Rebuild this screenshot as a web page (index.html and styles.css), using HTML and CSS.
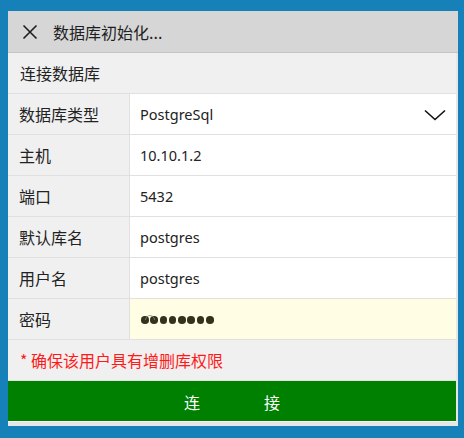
FILE: index.html
```html
<!DOCTYPE html>
<html lang="zh-CN">
<head>
<meta charset="utf-8">
<title>数据库初始化</title>
<link rel="stylesheet" href="styles.css">
</head>
<body>
<div class="panel">
  <div class="titlebar">
    <svg class="close" width="16" height="16" viewBox="0 0 16 16"><path d="M1.5 1.5 L14.5 14.5 M14.5 1.5 L1.5 14.5" stroke="#1e1e1e" stroke-width="1.6" fill="none"/></svg>
    <span class="title">数据库初始化...</span>
  </div>
  <div class="content">
    <div class="section">连接数据库</div>
    <div class="row">
      <div class="label">数据库类型</div>
      <div class="value select">
        <span>PostgreSql</span>
        <svg class="chev" width="22" height="12" viewBox="0 0 22 12"><path d="M1 1.5 L11 10.5 L21 1.5" stroke="#111" stroke-width="1.6" fill="none"/></svg>
      </div>
    </div>
    <div class="row">
      <div class="label">主机</div>
      <div class="value">10.10.1.2</div>
    </div>
    <div class="row">
      <div class="label">端口</div>
      <div class="value">5432</div>
    </div>
    <div class="row">
      <div class="label">默认库名</div>
      <div class="value">postgres</div>
    </div>
    <div class="row">
      <div class="label">用户名</div>
      <div class="value">postgres</div>
    </div>
    <div class="row">
      <div class="label">密码</div>
      <div class="value pwd">
        <span class="dots"><span class="dot"></span><span class="dot"></span><span class="dot"></span><span class="dot"></span><span class="dot"></span><span class="dot"></span><span class="dot"></span><span class="dot"></span></span>
        <svg class="ghost" width="12" height="8" viewBox="0 0 12 8"><path d="M1.5 7 A4.5 4.5 0 0 1 10.5 7" stroke="#888" stroke-width="0.8" fill="none"/></svg>
      </div>
    </div>
    <div class="warn">* 确保该用户具有增删库权限</div>
    <div class="button"><span>连</span><span>接</span></div>
  </div>
</div>
</body>
</html>
```
FILE: styles.css
```css
html, body {
  margin: 0;
  padding: 0;
}
body {
  background: #1681b8;
  width: 464px;
  height: 438px;
  overflow: hidden;
  padding: 11px 0 0 8px;
  box-sizing: border-box;
  font-family: "Noto Sans", "Noto Sans CJK SC", sans-serif;
  color: #222;
}
.panel {
  width: 450px;
  height: 415px;
  background: #e6e6e6;
  display: flex;
  flex-direction: column;
}
.titlebar {
  height: 41px;
  background: #d6d6d6;
  border-bottom: 1px solid #c4c4c4;
  display: flex;
  align-items: center;
}
.close {
  margin-left: 14px;
  margin-right: 15px;
  margin-top: 1px;
}
.title {
  font-family: "Noto Sans CJK SC", sans-serif;
  font-size: 16px;
  color: #1e1e1e;
  line-height: 1;
}
.content {
  width: 448px;
  background: #f0f0f0;
  display: flex;
  flex-direction: column;
  border-bottom: 1px solid #fafafa;
}
.section {
  height: 40px;
  border-bottom: 1px solid #e0e0e0;
  display: flex;
  align-items: center;
  padding-left: 12px;
  font-family: "Noto Sans CJK SC", sans-serif;
  font-size: 16px;
  color: #222;
}
.row {
  display: flex;
  height: 40px;
  border-bottom: 1px solid #e0e0e0;
}
.label {
  width: 110px;
  padding-left: 11px;
  border-right: 1px solid #e0e0e0;
  display: flex;
  align-items: center;
  font-family: "Noto Sans CJK SC", sans-serif;
  font-size: 16px;
  color: #222;
}
.value {
  flex: 1;
  background: #fff;
  display: flex;
  align-items: center;
  padding-left: 10px;
  font-family: "Noto Sans", sans-serif;
  font-size: 14.5px;
  color: #222;
}
.select {
  justify-content: space-between;
  padding-right: 10px;
}
.chev {
  margin-top: 1px;
}
.pwd {
  background: #fffee4;
  position: relative;
}
.dots {
  display: flex;
  gap: 1.8px;
  margin-top: 2px;
  margin-left: 1px;
}
.dot {
  width: 7.5px;
  height: 7.5px;
  border-radius: 50%;
  background: #33321c;
}
.ghost {
  position: absolute;
  left: 14px;
  top: 14px;
}
.warn {
  height: 40px;
  border-bottom: 1px solid #e0e0e0;
  display: flex;
  align-items: center;
  padding-left: 12px;
  font-family: "Noto Sans CJK SC", sans-serif;
  font-size: 16px;
  color: #ff1a1a;
}
.button {
  height: 40px;
  background: #008000;
  display: flex;
  justify-content: center;
  align-items: center;
  gap: 64px;
  font-family: "Noto Sans CJK SC", sans-serif;
  font-size: 16px;
  color: #fff;
  padding-top: 1px;
  box-sizing: border-box;
}
```
